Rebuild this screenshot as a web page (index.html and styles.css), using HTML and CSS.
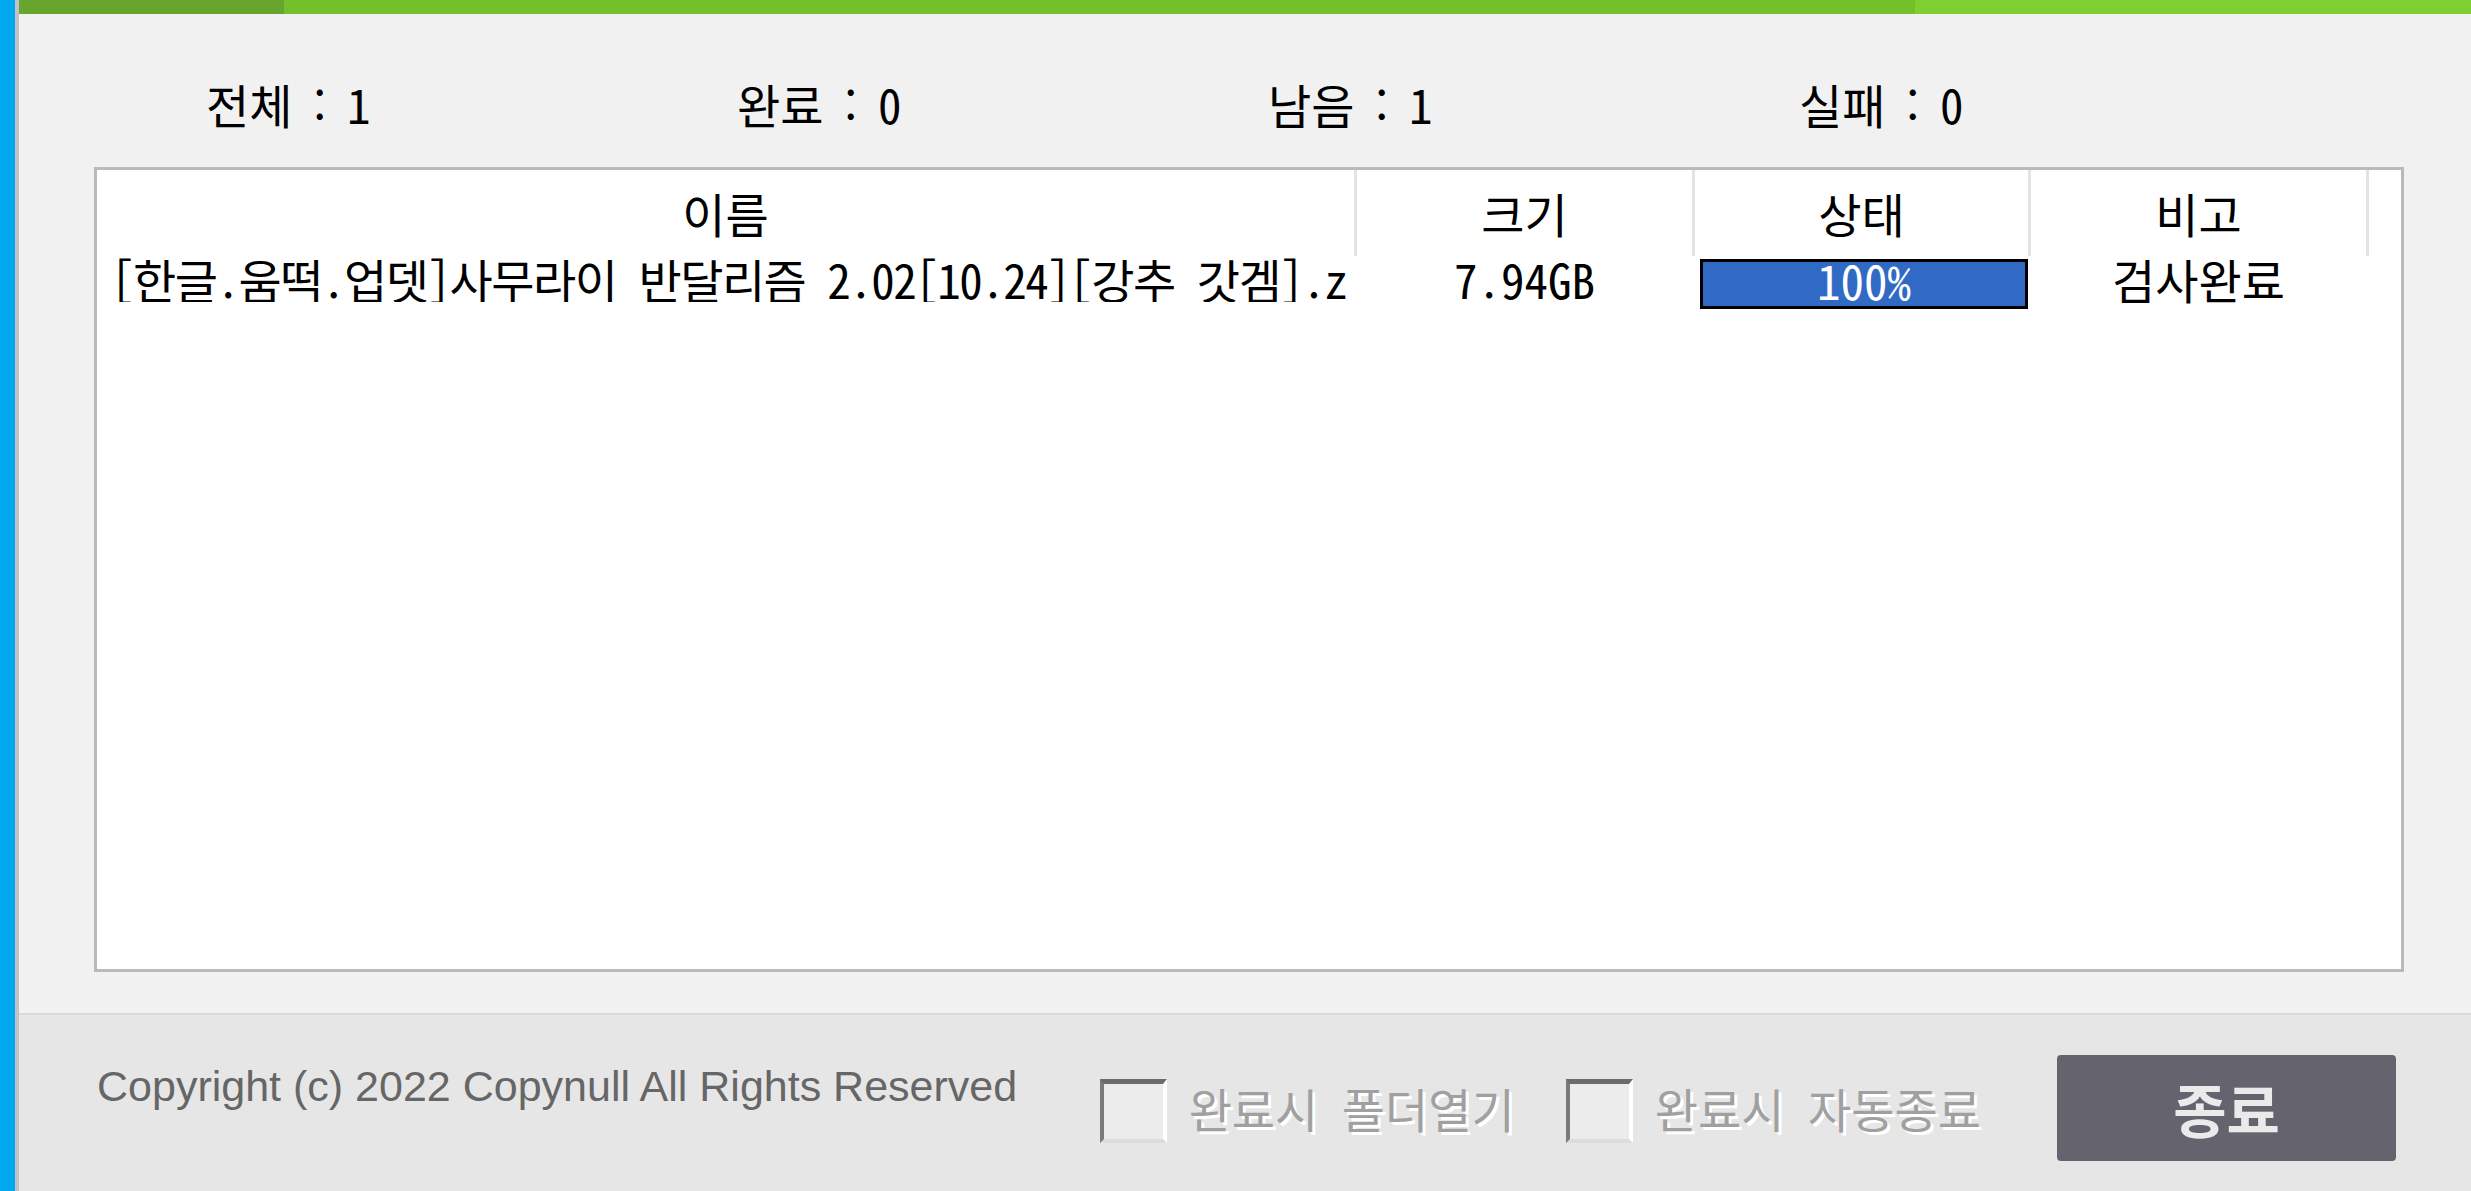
FILE: index.html
```html
<!DOCTYPE html>
<html lang="ko">
<head>
<meta charset="utf-8">
<title>파일 검사</title>
<link rel="stylesheet" href="styles.css">
</head>
<body>
<div class="window">
  <div class="side-bar"></div>
  <div class="main">
    <!-- top colour strip -->
    <div class="title-bar">
      <div class="seg-dark"></div>
      <div class="seg-mid"></div>
      <div class="seg-light"></div>
    </div>

    <div class="content">
      <!-- counters -->
      <div class="stats">
        <span class="stat">전체 : 1</span>
        <span class="stat">완료 : 0</span>
        <span class="stat">남음 : 1</span>
        <span class="stat">실패 : 0</span>
      </div>

      <!-- file list -->
      <div class="file-list">
        <div class="list-head">
          <div class="col col-name">이름</div>
          <div class="col col-size">크기</div>
          <div class="col col-status">상태</div>
          <div class="col col-note">비고</div>
        </div>
        <div class="list-row">
          <div class="cell col-name name-cell">[한글.움떡.업뎃]사무라이 반달리즘 2.02[10.24][강추 갓겜].zip</div>
          <div class="cell col-size">7.94GB</div>
          <div class="cell col-status">
            <div class="progress">
              <div class="progress-fill" style="width: 100%"></div>
              <span class="progress-text">100%</span>
            </div>
          </div>
          <div class="cell col-note">검사완료</div>
        </div>
      </div>
    </div>

    <!-- bottom bar -->
    <div class="footer">
      <div class="copyright">Copyright (c) 2022 Copynull All Rights Reserved</div>
      <label class="option"><span class="check"></span><span class="option-text">완료시 폴더열기</span></label>
      <label class="option"><span class="check"></span><span class="option-text">완료시 자동종료</span></label>
      <button class="close-btn" type="button">종료</button>
    </div>
  </div>
</div>
</body>
</html>
```

FILE: styles.css
```css
* {
  box-sizing: border-box;
}

html, body {
  margin: 0;
  padding: 0;
}

body {
  width: 2471px;
  height: 1191px;
  overflow: hidden;
  background-color: #f1f1f1;
  color: #000;
  font-family: "Noto Sans CJK KR", sans-serif;
  font-size: 47px;
  font-feature-settings: "hwid" 1;
}

.window {
  display: flex;
  height: 100%;
}

.side-bar {
  width: 19px;
  background-color: #00a8f0;
  border-right: 4px solid #c2c2c2;
}

.main {
  flex: 1;
  display: flex;
  flex-direction: column;
}

/* Top strip */
.title-bar {
  display: flex;
  height: 14px;
}

.seg-dark {
  width: 265px;
  background-color: #67a52f;
}

.seg-mid {
  width: 1631px;
  background-color: #75c02a;
}

.seg-light {
  flex: 1;
  background-color: #80cf31;
}

.content {
  flex: 1;
  padding: 67px 67px 0 75px;
}

/* Counters */
.stats {
  display: grid;
  grid-template-columns: repeat(4, 531px);
  height: 46px;
  line-height: 46px;
  padding-left: 112px;
  margin-bottom: 40px;
  word-spacing: -8px;
}

/* File list */
.file-list {
  height: 805px;
  background-color: #fff;
  border: 3px solid #bababa;
}

.list-head,
.list-row {
  display: flex;
}

.list-head {
  height: 86px;
}

.list-row {
  height: 56px;
  align-items: flex-start;
}

.col,
.cell {
  display: flex;
  align-items: center;
  justify-content: center;
  border-right: 3px solid #e3e3e3;
  line-height: 46px;
}

.cell {
  border-right-color: transparent;
}

.col-name {
  width: 1260px;
}

.col-size {
  width: 338px;
}

.col-status {
  width: 336px;
}

.col-note {
  width: 338px;
}

.name-cell {
  justify-content: flex-start;
  padding-left: 14px;
  overflow: hidden;
  white-space: nowrap;
  letter-spacing: -1.5px;
}

.list-row .col-status {
  justify-content: flex-start;
  padding-left: 5px;
}

.progress {
  position: relative;
  width: 328px;
  height: 50px;
  margin-top: 3px;
  border: 3px solid #000;
  background-color: #fff;
}

.progress-fill {
  height: 100%;
  background-color: #316ac5;
}

.progress-text {
  position: absolute;
  top: -4px;
  left: 0;
  right: 0;
  bottom: 4px;
  display: flex;
  align-items: center;
  justify-content: center;
  color: #fff;
}

/* Bottom bar */
.footer {
  display: flex;
  align-items: center;
  height: 178px;
  padding: 10px 75px 0 78px;
  background-color: #e6e6e6;
  border-top: 2px solid #dadada;
}

.copyright {
  align-self: flex-start;
  margin-top: 38px;
  margin-right: auto;
  font-family: "Liberation Sans", Arial, sans-serif;
  font-size: 43px;
  line-height: 46px;
  color: #666;
}

.option {
  display: flex;
  align-items: center;
}

.option + .option {
  margin-left: 51px;
}

.check {
  width: 67px;
  height: 64px;
  margin-top: 6px;
  margin-right: 22px;
  background-color: #ececec;
  border-top: 5px solid #6b6b6b;
  border-left: 4px solid #7a7a7a;
  border-right: 4px solid #fff;
  border-bottom: 4px solid #dcdcdc;
}

.option-text {
  line-height: 46px;
  color: #a0a0a0;
  text-shadow: 3px 3px 0 #fff;
}

.close-btn {
  width: 339px;
  height: 106px;
  margin-left: 76px;
  border: none;
  border-radius: 4px;
  background-color: #65646e;
  color: #eaeaea;
  font-family: "Noto Sans CJK KR", sans-serif;
  font-size: 58px;
  font-weight: bold;
}
```
